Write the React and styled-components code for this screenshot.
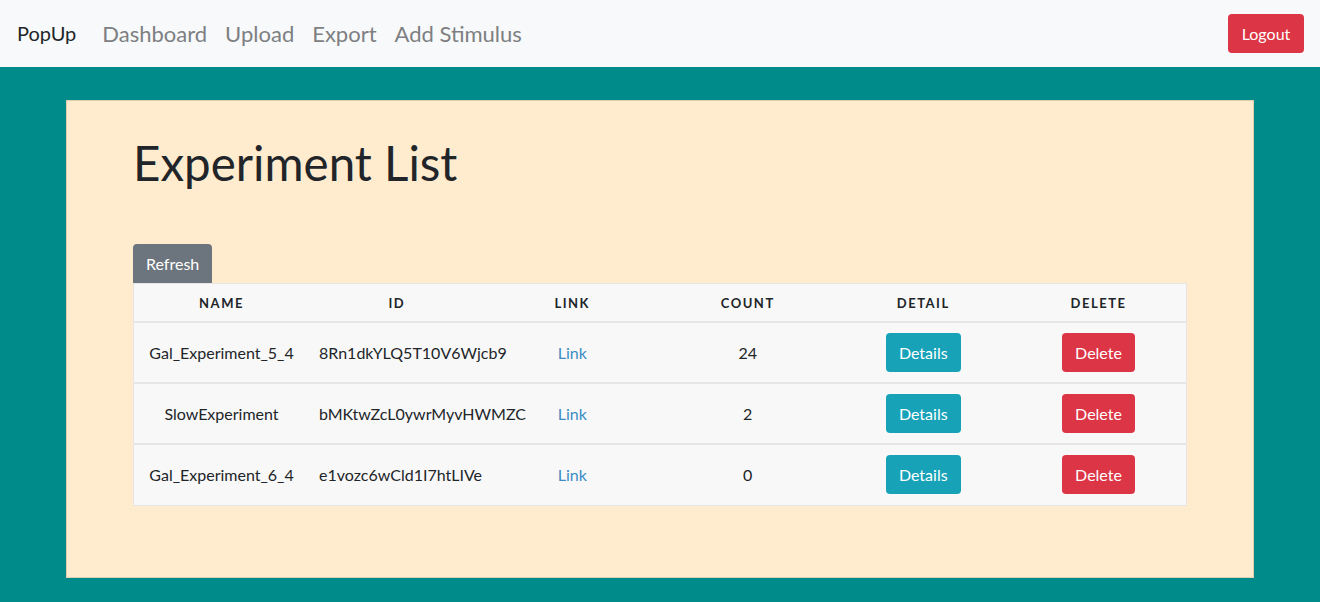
import React from 'react'
import styled, { createGlobalStyle } from 'styled-components'

const experiments = [
    { name: 'Gal_Experiment_5_4', id: '8Rn1dkYLQ5T10V6Wjcb9', count: 24 },
    { name: 'SlowExperiment', id: 'bMKtwZcL0ywrMyvHWMZC', count: 2 },
    { name: 'Gal_Experiment_6_4', id: 'e1vozc6wCld1I7htLIVe', count: 0 },
]

const columns = ['Name', 'ID', 'Link', 'Count', 'Detail', 'Delete']

export default function App() {
    return (
        <>
            <GlobalStyle />
            <Navbar>
                <NavLeft>
                    <Brand>PopUp</Brand>
                    <NavLinks>
                        <NavLink>Dashboard</NavLink>
                        <NavLink>Upload</NavLink>
                        <NavLink>Export</NavLink>
                        <NavLink>Add Stimulus</NavLink>
                    </NavLinks>
                </NavLeft>
                <LogoutButton $variant="danger">Logout</LogoutButton>
            </Navbar>
            <Main>
                <Panel>
                    <Title>Experiment List</Title>
                    <RefreshButton>Refresh</RefreshButton>
                    <Table>
                        <thead>
                            <tr>
                                {columns.map((c) => (
                                    <HeadCell key={c}>{c}</HeadCell>
                                ))}
                            </tr>
                        </thead>
                        <tbody>
                            {experiments.map((e) => (
                                <Row key={e.id}>
                                    <Cell>{e.name}</Cell>
                                    <Cell $left>{e.id}</Cell>
                                    <Cell>
                                        <TableLink href="#">Link</TableLink>
                                    </Cell>
                                    <Cell>{e.count}</Cell>
                                    <Cell>
                                        <Button $variant="info">Details</Button>
                                    </Cell>
                                    <Cell>
                                        <Button $variant="danger">Delete</Button>
                                    </Cell>
                                </Row>
                            ))}
                        </tbody>
                    </Table>
                </Panel>
            </Main>
        </>
    )
}

const GlobalStyle = createGlobalStyle`
    body {
        margin: 0;
        background: #008b8b;
        font-family: "Source Sans Pro", Lato, "Noto Sans", sans-serif;
        color: #212529;
    }
`

const Navbar = styled.nav`
    height: 67px;
    background: #f8f9fa;
    display: flex;
    align-items: center;
    justify-content: space-between;
    padding: 0 16px 1px 17px;
    box-sizing: border-box;
`

const NavLeft = styled.div`
    display: flex;
    align-items: center;
    gap: 26px;
`

const Brand = styled.span`
    font-size: 20px;
    color: #212529;
`

const NavLinks = styled.div`
    display: flex;
    gap: 18px;
`

const NavLink = styled.a`
    font-size: 22px;
    color: #7d7f82;
    cursor: pointer;
`

const Main = styled.main`
    padding: 33px 66px 24px;
`

const Panel = styled.section`
    background: #ffebcd;
    height: 478px;
    box-sizing: border-box;
    padding: 0 66px;
    border: 1px solid rgba(0, 0, 0, 0.12);
    display: flex;
    flex-direction: column;
    align-items: flex-start;
`

const Title = styled.h1`
    font-size: 47.5px;
    font-weight: 400;
    margin: 33px 0 53px;
    line-height: 1.2;
`

const Button = styled.button`
    font-family: inherit;
    font-size: 16px;
    color: #fff;
    border: 1px solid transparent;
    border-radius: 4px;
    padding: 0 12px;
    height: 39px;
    background: ${(p) => (p.$variant === 'info' ? '#17a2b8' : '#dc3545')};
    cursor: pointer;
`

const LogoutButton = styled(Button)`
    width: 76px;
`

const RefreshButton = styled(Button)`
    background: #6c757d;
    width: 79px;
    border-radius: 4px 4px 0 0;
`

const Table = styled.table`
    width: 100%;
    border-collapse: collapse;
    background: #f8f8f8;
    border: 1px solid #e6e6e6;
    table-layout: fixed;
`

const HeadCell = styled.th`
    height: 35px;
    font-size: 13px;
    font-weight: 700;
    letter-spacing: 1.5px;
    text-transform: uppercase;
    text-align: center;
    border-bottom: 2px solid #e6e6e6;
`

const Row = styled.tr`
    height: 61px;
    & + & td {
        border-top: 2px solid #e6e6e6;
    }
`

const Cell = styled.td`
    font-size: 16px;
    text-align: ${(p) => (p.$left ? 'left' : 'center')};
    padding: 0 10px;
    white-space: nowrap;
`

const TableLink = styled.a`
    color: #3a8bc5;
    text-decoration: none;
`
